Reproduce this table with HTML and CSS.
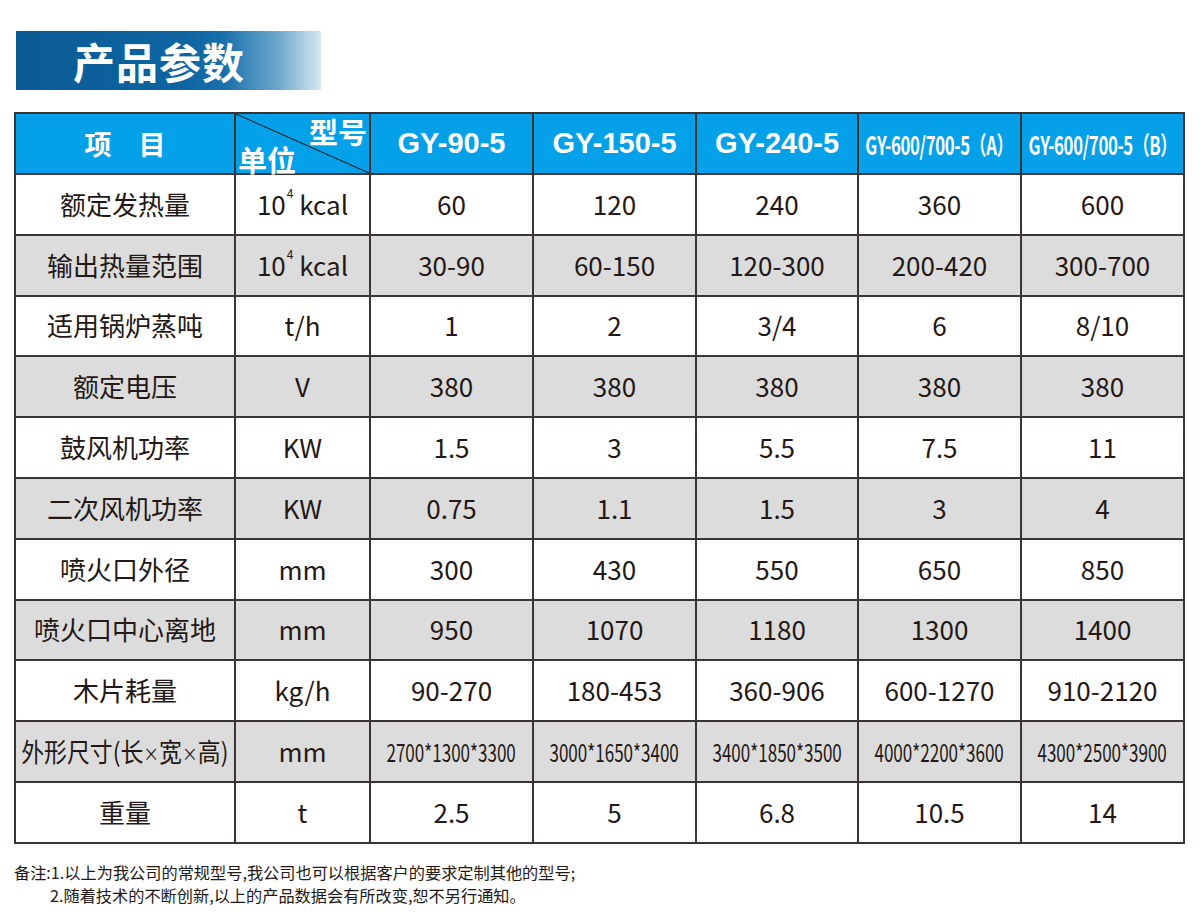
FILE: index.html
```html
<!DOCTYPE html>
<html lang="zh-CN">
<head>
<meta charset="utf-8">
<title>产品参数</title>
<link rel="stylesheet" href="styles.css">
</head>
<body>
<div class="page">
  <div class="banner"><span class="banner-text">产品参数</span></div>
  <table class="spec">
    <colgroup>
      <col class="c-item"><col class="c-unit"><col class="c-m"><col class="c-m"><col class="c-m4"><col class="c-m"><col class="c-m">
    </colgroup>
    <thead>
      <tr class="head">
        <th class="h-item">项　目</th>
        <th class="h-diag"><div class="diag"><span class="d-top">型号</span><span class="d-bot">单位</span></div></th>
        <th class="h-model">GY-90-5</th>
        <th class="h-model">GY-150-5</th>
        <th class="h-model">GY-240-5</th>
        <th class="h-model"><span class="narrow-b">GY-600/700-5（A）</span></th>
        <th class="h-model"><span class="narrow-b">GY-600/700-5（B）</span></th>
      </tr>
    </thead>
    <tbody>
      <tr><td>额定发热量</td><td>10<sup>4</sup> kcal</td><td>60</td><td>120</td><td>240</td><td>360</td><td>600</td></tr>
      <tr class="alt"><td>输出热量范围</td><td>10<sup>4</sup> kcal</td><td>30-90</td><td>60-150</td><td>120-300</td><td>200-420</td><td>300-700</td></tr>
      <tr><td>适用锅炉蒸吨</td><td>t/h</td><td>1</td><td>2</td><td>3/4</td><td>6</td><td>8/10</td></tr>
      <tr class="alt"><td>额定电压</td><td>V</td><td>380</td><td>380</td><td>380</td><td>380</td><td>380</td></tr>
      <tr><td>鼓风机功率</td><td>KW</td><td>1.5</td><td>3</td><td>5.5</td><td>7.5</td><td>11</td></tr>
      <tr class="alt"><td>二次风机功率</td><td>KW</td><td>0.75</td><td>1.1</td><td>1.5</td><td>3</td><td>4</td></tr>
      <tr><td>喷火口外径</td><td>mm</td><td>300</td><td>430</td><td>550</td><td>650</td><td>850</td></tr>
      <tr class="alt"><td>喷火口中心离地</td><td>mm</td><td>950</td><td>1070</td><td>1180</td><td>1300</td><td>1400</td></tr>
      <tr><td>木片耗量</td><td>kg/h</td><td>90-270</td><td>180-453</td><td>360-906</td><td>600-1270</td><td>910-2120</td></tr>
      <tr class="alt"><td><span class="narrow-l">外形尺寸(长<span class="times">×</span>宽<span class="times">×</span>高)</span></td><td>mm</td><td><span class="narrow">2700*1300*3300</span></td><td><span class="narrow">3000*1650*3400</span></td><td><span class="narrow">3400*1850*3500</span></td><td><span class="narrow">4000*2200*3600</span></td><td><span class="narrow">4300*2500*3900</span></td></tr>
      <tr><td>重量</td><td>t</td><td>2.5</td><td>5</td><td>6.8</td><td>10.5</td><td>14</td></tr>
    </tbody>
  </table>
  <div class="notes">
    <p class="note">备注:1.以上为我公司的常规型号,我公司也可以根据客户的要求定制其他的型号;</p>
    <p class="note note-2">2.随着技术的不断创新,以上的产品数据会有所改变,恕不另行通知。</p>
  </div>
</div>
</body>
</html>
```

FILE: styles.css
```css
html, body {
  margin: 0;
  padding: 0;
  background: #ffffff;
}

body {
  font-family: "Noto Sans CJK SC", "Noto Sans", sans-serif;
  color: #231815;
}

.page {
  padding: 31px 0 0 0;
}

.banner {
  margin-left: 16px;
  width: 305px;
  height: 59px;
  background: linear-gradient(to right, #0b5a94 0%, #0e64a1 55%, #176fab 68%, #6ea8cd 86%, #d6e8f2 100%);
  display: flex;
  align-items: center;
  padding-left: 57px;
  box-sizing: border-box;
}

.banner-text {
  color: #ffffff;
  font-weight: 700;
  font-size: 42px;
  line-height: 1;
  letter-spacing: 1px;
}

.spec {
  margin: 22px 0 0 14px;
  border-collapse: collapse;
  table-layout: fixed;
  width: 1169px;
}

.c-item { width: 220px; }
.c-unit { width: 135px; }
.c-m { width: 163px; }
.c-m4 { width: 162px; }

.spec th,
.spec td {
  border: 2px solid #3b3434;
  padding: 0;
  text-align: center;
  vertical-align: middle;
  white-space: nowrap;
}

.head {
  height: 61px;
  background: #04a0e8;
}

.spec th {
  color: #ffffff;
  font-weight: 700;
}

.h-item {
  font-size: 27px;
}

.h-model {
  font-family: "Liberation Sans", Arial, sans-serif;
  font-size: 29px;
}

.narrow-b {
  display: inline-block;
  font-family: "Noto Sans CJK SC", sans-serif;
  font-size: 25px;
  font-weight: 700;
  letter-spacing: -0.5px;
  transform: scaleX(0.67);
  margin: 0 -60px;
}

.h-diag {
  background: linear-gradient(to top right, transparent calc(50% - 1px), #1a1a1a 50%, transparent calc(50% + 1px));
}

.diag {
  height: 57px;
  display: flex;
  flex-direction: column;
  font-size: 29px;
  line-height: 28px;
}

.d-top {
  align-self: flex-end;
  padding-right: 2px;
  margin-top: 2px;
}

.d-bot {
  align-self: flex-start;
  padding-left: 2px;
  margin-top: auto;
  margin-bottom: 1px;
}

.spec tbody tr {
  height: 60.8px;
}

.spec td {
  font-size: 26px;
  line-height: 1.2;
  padding-bottom: 2px;
  background: #ffffff;
}

.spec tr.alt td {
  background: #dcdcdc;
}

.spec sup {
  font-size: 12px;
  vertical-align: top;
  position: relative;
  top: -2px;
  margin-left: 1px;
}

.narrow {
  display: inline-block;
  font-size: 24px;
  transform: scaleX(0.71);
  margin: 0 -30px;
}

.narrow-l {
  display: inline-block;
  font-size: 26px;
  transform: scaleX(0.88);
  margin: 0 -30px;
}

.times {
  display: inline-block;
  font-size: 18px;
  vertical-align: 1px;
}

.notes {
  margin: 17px 0 0 14px;
  font-size: 16.2px;
  line-height: 23px;
  color: #231815;
}

.note {
  margin: 0;
}

.note-2 {
  padding-left: 36px;
}
```
